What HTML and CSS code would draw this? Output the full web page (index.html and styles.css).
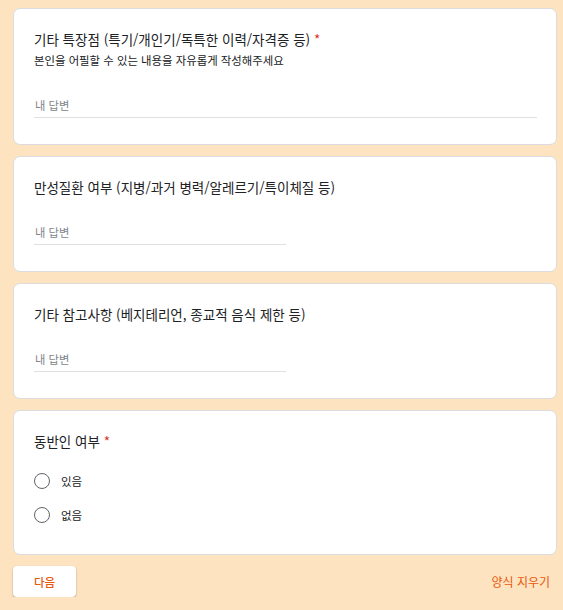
FILE: index.html
```html
<!DOCTYPE html>
<html lang="ko">
<head>
  <meta charset="UTF-8">
  <title>설문지</title>
  <link rel="stylesheet" href="styles.css">
</head>
<body>
  <div class="form">
    <div class="card">
      <div class="q-head">
        <div class="q-title">기타 특장점 (특기/개인기/독특한 이력/자격증 등) <span class="req">*</span></div>
        <div class="q-desc">본인을 어필할 수 있는 내용을 자유롭게 작성해주세요</div>
      </div>
      <input class="answer wide" type="text" placeholder="내 답변">
    </div>

    <div class="card">
      <div class="q-head">
        <div class="q-title">만성질환 여부 (지병/과거 병력/알레르기/특이체질 등)</div>
      </div>
      <input class="answer" type="text" placeholder="내 답변">
    </div>

    <div class="card">
      <div class="q-head">
        <div class="q-title">기타 참고사항 (베지테리언, 종교적 음식 제한 등)</div>
      </div>
      <input class="answer" type="text" placeholder="내 답변">
    </div>

    <div class="card">
      <div class="q-head q-head-choice">
        <div class="q-title">동반인 여부 <span class="req">*</span></div>
      </div>
      <div class="options">
        <label class="option"><span class="radio"></span>있음</label>
        <label class="option"><span class="radio"></span>없음</label>
      </div>
    </div>

    <div class="footer">
      <button class="btn-next">다음</button>
      <a class="clear" href="#">양식 지우기</a>
    </div>
  </div>
</body>
</html>
```

FILE: styles.css
```css
* { box-sizing: border-box; }

body {
  margin: 0;
  background: #fde3c0;
  font-family: "Noto Sans CJK KR", "Noto Sans", sans-serif;
  color: #202124;
}

.form {
  width: 544px;
  margin-left: 13px;
  padding-top: 8px;
}

.card {
  background: #fff;
  border: 1px solid #dadce0;
  border-radius: 7px;
  padding: 19px 20px 26px;
  margin-bottom: 11px;
}

.q-head { margin-bottom: 24px; }
.q-head-choice { margin-bottom: 19px; }
.q-title { font-size: 13.5px; line-height: 22px; }
.q-desc { font-size: 11.4px; line-height: 21px; }
.req { color: #d93025; }

.answer {
  display: block;
  width: 252px;
  border: 0;
  border-bottom: 1px solid #e0e0e0;
  padding: 0 0 2px 1px;
  font-family: inherit;
  font-size: 11.3px;
  line-height: 20px;
  outline: none;
  color: #202124;
}
.answer.wide { width: 503px; }
.answer::placeholder { color: #80868b; }

.options { display: flex; flex-direction: column; gap: 14px; padding-bottom: 3px; }
.option {
  display: flex;
  align-items: center;
  gap: 11px;
  font-size: 11.5px;
  line-height: 20px;
}
.radio {
  width: 16px;
  height: 16px;
  border: 1.5px solid #5f6368;
  border-radius: 50%;
}

.footer {
  display: flex;
  justify-content: space-between;
  align-items: center;
  padding-right: 7px;
}
.btn-next {
  width: 63px;
  height: 31px;
  border: 0;
  border-radius: 4px;
  background: #fff;
  box-shadow: 0 1px 2px rgba(0, 0, 0, .35);
  color: #e8590c;
  font-family: inherit;
  font-size: 11.5px;
  font-weight: 500;
}
.clear {
  color: #e8590c;
  font-size: 12px;
  text-decoration: none;
}
```
